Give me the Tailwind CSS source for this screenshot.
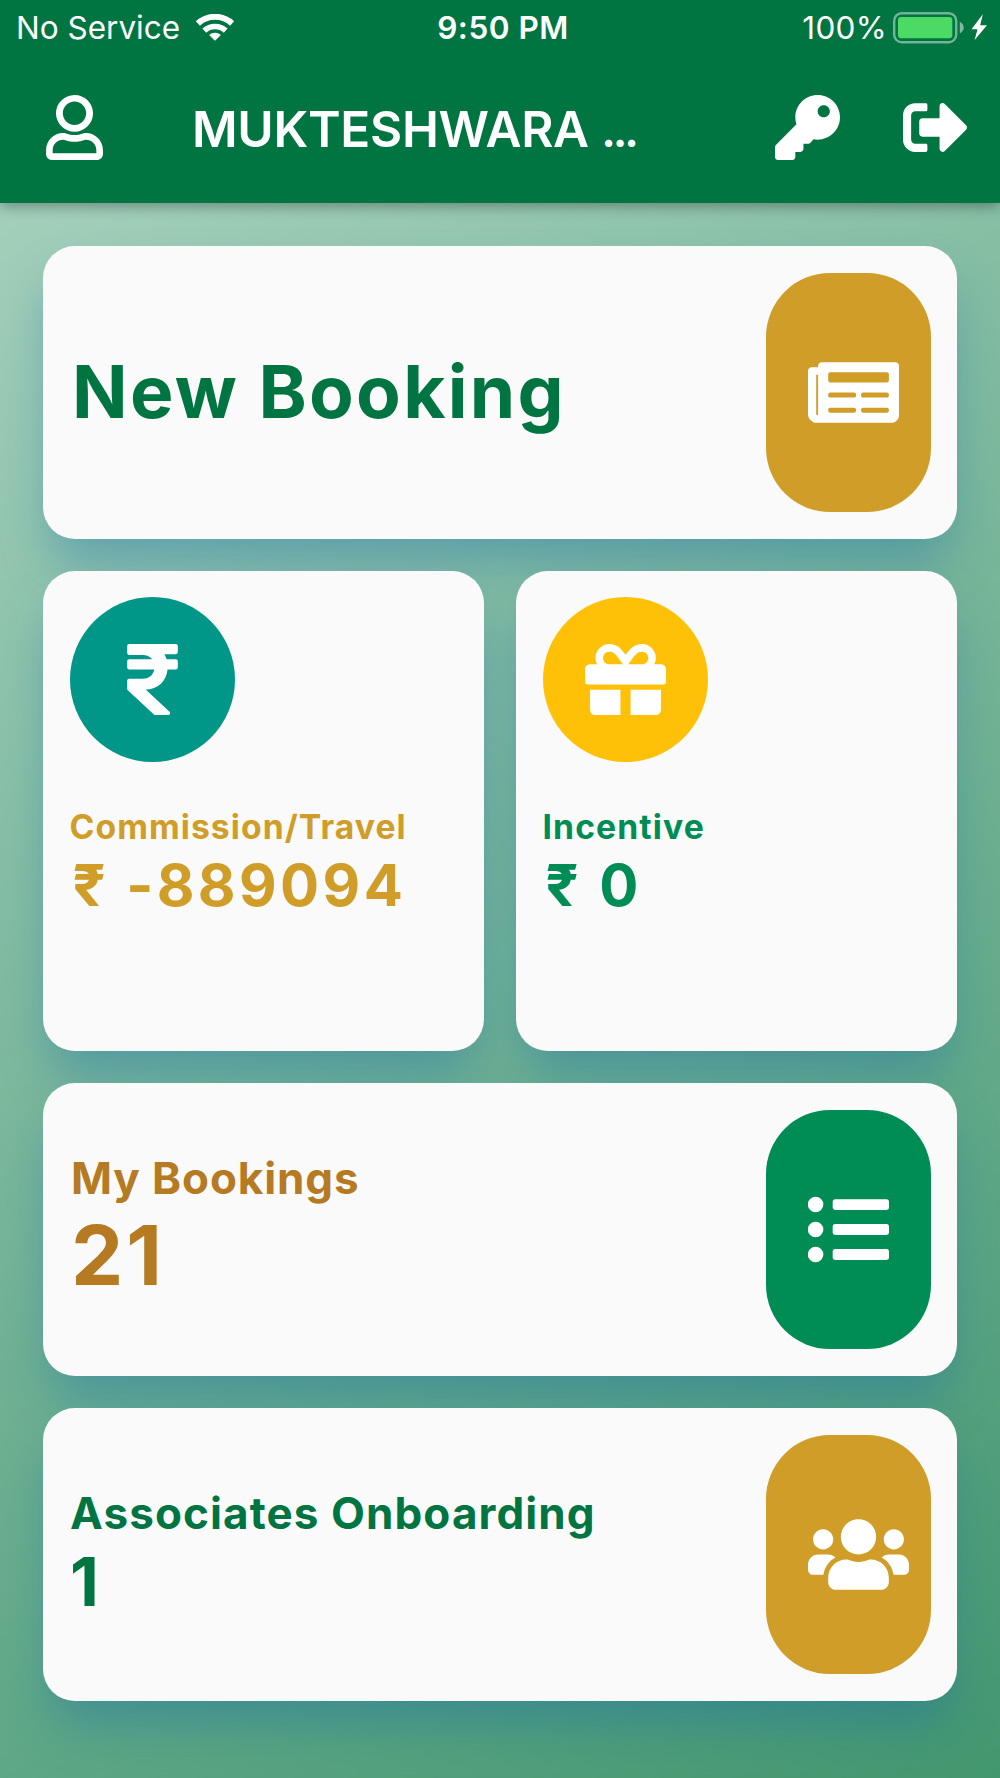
<!DOCTYPE html>
<html lang="en">
<head>
    <meta charset="UTF-8">
    <meta name="viewport" content="width=device-width, initial-scale=1.0">
    <title>Dashboard</title>
    <script src="https://cdn.jsdelivr.net/npm/@tailwindcss/browser@4"></script>
</head>
<body class="font-['Inter','Noto_Sans',sans-serif] w-[1000px] h-[1778px] overflow-hidden flex flex-col bg-[#5fa888]">

    <!-- Header -->
    <header class="relative z-20 h-[202.5px] shrink-0 bg-[#007542] text-white shadow-[0_4px_12px_rgba(0,0,0,0.3)]">

        <!-- Status bar -->
        <div class="grid grid-cols-[1fr_auto_1fr] items-center h-[54px] pl-4 pr-[13px] pt-px text-[31.5px] leading-[54px]">
            <div class="flex items-center gap-[15px]">
                <span>No Service</span>
                <svg class="w-[40px] h-[28px]" viewBox="0 0 40 28" fill="none" stroke="#fff">
                    <path d="M2.900 9.500a25 25 0 0 1 34.200 0" stroke-width="6"/>
                    <path d="M9.300 16.600a15.800 15.800 0 0 1 21.400 0" stroke-width="5.600"/>
                    <path d="M20 26.800l-5.900-5.700a8.600 8.600 0 0 1 11.800 0z" fill="#fff" stroke="none"/>
                </svg>
            </div>
            <span class="pl-[3px] font-semibold tracking-[0.5px]">9:50 PM</span>
            <div class="flex items-center justify-end">
                <span class="tracking-[0.3px] mr-[6px]">100%</span>
                <svg class="w-[94px] h-[32px]" viewBox="0 0 94 32">
                    <rect x="1.200" y="1.200" width="62" height="29" rx="7.500" fill="none" stroke="#fff" stroke-opacity=".45" stroke-width="2.400"/>
                    <rect x="5" y="5" width="54.300" height="21.300" rx="3" fill="#4cd964"/>
                    <path d="M66.800 9.800c5.200 2.600 5.200 9 0 11.600z" fill="#fff" fill-opacity=".5"/>
                    <path d="M89.800 2.300L78.500 17.300h6L81.600 28 94 13.200h-6.800z" fill="#fff"/>
                </svg>
            </div>
        </div>

        <!-- App bar -->
        <div class="flex items-center h-[147px] pl-[46px] pr-8">
            <svg class="w-[57px] h-[65px]" viewBox="0 0 448 512" fill="#fff">
                <path d="M313.600 300c-28.700 0-42.500 16-89.600 16-47.100 0-60.800-16-89.600-16C60.200 300 0 360.200 0 434.400V464c0 26.500 21.500 48 48 48h352c26.500 0 48-21.500 48-48v-29.600c0-74.200-60.200-134.400-134.400-134.400zM396 459H52v-24.600c0-45.600 36.800-81.400 82.400-81.400 14.600 0 38.300 16 89.600 16 51.700 0 74.900-16 89.600-16 45.600 0 82.400 35.800 82.400 81.400V459zM224 290c80.500 0 146-65.500 146-146S304.500 0 224 0 78 65.500 78 144s66.500 146 146 146zm0-238c50.900 0 92 41.100 92 92s-41.100 92-92 92-92-41.100-92-92 41.100-92 92-92z"/>
            </svg>
            <h1 class="ml-[89px] pt-[3px] w-[489px] text-[49.5px] font-semibold tracking-[-0.3px] whitespace-nowrap">MUKTESHWARA<span class="pl-[4px] text-[46px] tracking-[-3.2px]"> ...</span></h1>
            <svg class="ml-[94px] w-[65px] h-[65px]" viewBox="0 0 512 512" fill="#fff">
                <path d="M512 176.001C512 273.203 433.202 352 336 352c-11.220 0-22.190-1.062-32.827-3.069l-24.012 27.014A23.999 23.999 0 0 1 261.223 384H224v40c0 13.255-10.745 24-24 24h-40v40c0 13.255-10.745 24-24 24H24c-13.255 0-24-10.745-24-24v-78.059c0-6.365 2.529-12.470 7.029-16.971l161.802-161.802C163.108 213.814 160 195.271 160 176 160 78.798 238.797.001 335.999 0 433.488-.001 512 78.511 512 176.001zM336 128c0 26.510 21.490 48 48 48s48-21.490 48-48-21.490-48-48-48-48 21.490-48 48z"/>
            </svg>
            <svg class="ml-auto w-[65px] h-[65px]" viewBox="0 0 512 512" fill="#fff">
                <path d="M497 273L329 441c-15 15-41 4.500-41-17v-96H152c-13.300 0-24-10.700-24-24v-96c0-13.300 10.700-24 24-24h136V88c0-21.400 25.900-32 41-17l168 168c9.300 9.400 9.300 24.600 0 34zM192 436v-40c0-6.600-5.400-12-12-12H96c-17.700 0-32-14.300-32-32V160c0-17.700 14.300-32 32-32h84c6.600 0 12-5.400 12-12V76c0-6.600-5.400-12-12-12H96c-53 0-96 43-96 96v192c0 53 43 96 96 96h84c6.600 0 12-5.400 12-12z"/>
            </svg>
        </div>
    </header>

    <!-- Cards -->
    <main class="flex-1 px-[43px] pt-[43px] flex flex-col gap-8 bg-[linear-gradient(147.6deg,#a3cfbb,#43976f)]">

        <section class="h-[293px] shrink-0 flex items-center justify-between p-[27px] pr-[26.5px] rounded-[32px] bg-[#fafafa] shadow-[0_30px_50px_-8px_rgba(20,105,170,0.4)]">
            <h2 class="pl-[2px] text-[73px] leading-[88px] font-bold tracking-[2.26px] text-[#007542]">New Booking</h2>
            <div class="w-[165px] h-full flex items-center pl-[42px] rounded-[64px] bg-[#cf9d28]">
                <svg class="w-[91px] h-[81px] shrink-0" viewBox="0 0 576 512" fill="#fff">
                    <path d="M552 64H88c-13.255 0-24 10.745-24 24v8H24c-13.255 0-24 10.745-24 24v272c0 30.928 25.072 56 56 56h472c26.510 0 48-21.490 48-48V88c0-13.255-10.745-24-24-24zM58 400a8 8 0 0 1-6-8V144h12v248a8 8 0 0 1-6 8zm234-16H140c-6.627 0-12-5.373-12-12v-8c0-6.627 5.373-12 12-12h152c6.627 0 12 5.373 12 12v8c0 6.627-5.373 12-12 12zm208 0H348c-6.627 0-12-5.373-12-12v-8c0-6.627 5.373-12 12-12h152c6.627 0 12 5.373 12 12v8c0 6.627-5.373 12-12 12zm-208-96H140c-6.627 0-12-5.373-12-12v-8c0-6.627 5.373-12 12-12h152c6.627 0 12 5.373 12 12v8c0 6.627-5.373 12-12 12zm208 0H348c-6.627 0-12-5.373-12-12v-8c0-6.627 5.373-12 12-12h152c6.627 0 12 5.373 12 12v8c0 6.627-5.373 12-12 12zm0-96H140c-6.627 0-12-5.373-12-12v-40c0-6.627 5.373-12 12-12h360c6.627 0 12 5.373 12 12v40c0 6.627-5.373 12-12 12z"/>
                </svg>
            </div>
        </section>

        <div class="grid grid-cols-2 gap-8 h-[480px] shrink-0">
            <div class="rounded-[32px] shadow-[0_30px_50px_-8px_rgba(20,105,170,0.4)]">
                <section class="relative z-10 h-full p-[26.500px] rounded-[32px] bg-[#fafafa]">
                    <div class="size-[165px] rounded-full flex items-center justify-center bg-[#009688]">
                        <svg class="w-[51px] h-[81px]" viewBox="0 0 320 512" fill="#fff">
                            <path d="M308 96c6.627 0 12-5.373 12-12V44c0-6.627-5.373-12-12-12H12C5.373 32 0 37.373 0 44v44.748c0 6.627 5.373 12 12 12h85.280c27.308 0 48.261 9.958 60.970 27.252H12c-6.627 0-12 5.373-12 12v40c0 6.627 5.373 12 12 12h158.757c-6.217 36.086-32.951 58.632-74.757 58.632H12c-6.627 0-12 5.373-12 12v53.012c0 3.349 1.400 6.546 3.861 8.818l165.052 152.356a12.001 12.001 0 0 0 8.139 3.182h82.562c10.924 0 16.166-13.408 8.139-20.818L116.871 319.906c76.499-2.340 131.144-53.395 138.318-127.906H308c6.627 0 12-5.373 12-12v-40c0-6.627-5.373-12-12-12h-58.690c-3.486-11.541-8.280-22.246-14.252-32H308z"/>
                        </svg>
                    </div>
                    <p class="mt-[44px] text-[33.7px] leading-[42px] font-bold tracking-[1.05px] text-[#d09d28]">Commission/Travel</p>
                    <p class="pl-[3px] mt-px text-[58px] leading-[72px] font-bold tracking-[3.4px] text-[#d09d28] whitespace-nowrap">₹ -889094</p>
                </section>
            </div>

            <div class="rounded-[32px] shadow-[0_30px_50px_-8px_rgba(20,105,170,0.4)]">
                <section class="relative z-10 h-full p-[26.500px] rounded-[32px] bg-[#fafafa]">
                    <div class="size-[165px] rounded-full flex items-center justify-center bg-[#ffc107]">
                        <svg class="size-[81px]" viewBox="0 0 512 512" fill="#fff">
                            <path d="M32 448c0 17.700 14.300 32 32 32h160V320H32v128zm256 32h160c17.700 0 32-14.300 32-32V320H288v160zm192-320h-42.100c6.200-12.100 10.100-25.500 10.100-40 0-48.500-39.500-88-88-88-41.600 0-68.500 21.300-103 68.300-34.500-47-61.400-68.300-103-68.300-48.500 0-88 39.500-88 88 0 14.500 3.800 27.900 10.100 40H32c-17.700 0-32 14.300-32 32v80c0 8.800 7.200 16 16 16h480c8.800 0 16-7.200 16-16v-80c0-17.700-14.300-32-32-32zm-326.100 0c-22.100 0-40-17.900-40-40s17.900-40 40-40c19.900 0 34.600 3.300 86.100 80h-86.100zm206.100 0h-86.100c51.400-76.500 65.700-80 86.100-80 22.100 0 40 17.900 40 40s-17.900 40-40 40z"/>
                        </svg>
                    </div>
                    <p class="mt-[44px] text-[33.7px] leading-[42px] font-bold tracking-[1.1px] text-[#008c55]">Incentive</p>
                    <p class="pl-[3px] mt-px text-[58px] leading-[72px] font-bold tracking-[3.5px] text-[#008c55]">₹ 0</p>
                </section>
            </div>
        </div>

        <section class="h-[293px] shrink-0 flex items-center justify-between p-[27px] pr-[26.5px] rounded-[32px] bg-[#fafafa] shadow-[0_30px_50px_-8px_rgba(20,105,170,0.4)]">
            <div class="pb-[3px] pl-px text-[#b57a22]">
                <p class="text-[44px] leading-[54px] font-bold tracking-[0.89px]">My Bookings</p>
                <p class="mt-px text-[83px] leading-[98px] font-bold tracking-[3px]">21</p>
            </div>
            <div class="w-[165px] h-full flex items-center pl-[42px] rounded-[64px] bg-[#008c55]">
                <svg class="size-[81px] shrink-0" viewBox="0 0 512 512" fill="#fff">
                    <circle cx="48" cy="98" r="49"/>
                    <circle cx="48" cy="256" r="49"/>
                    <circle cx="48" cy="414" r="49"/>
                    <rect x="156" y="64" width="356" height="68" rx="16"/>
                    <rect x="156" y="222" width="356" height="68" rx="16"/>
                    <rect x="156" y="380" width="356" height="68" rx="16"/>
                </svg>
            </div>
        </section>

        <section class="h-[293px] shrink-0 flex items-center justify-between p-[27px] pr-[26.5px] rounded-[32px] bg-[#fafafa] shadow-[0_30px_50px_-8px_rgba(20,105,170,0.4)]">
            <div class="text-[#007542]">
                <p class="text-[44px] leading-[54px] font-bold tracking-[1.1px]">Associates Onboarding</p>
                <p class="mt-px text-[67px] leading-[82px] font-bold">1</p>
            </div>
            <div class="w-[165px] h-full flex items-center pl-[42px] rounded-[64px] bg-[#cf9d28]">
                <svg class="w-[101px] h-[81px] shrink-0" viewBox="0 0 640 512" fill="#fff">
                    <path d="M96 224c35.300 0 64-28.700 64-64s-28.700-64-64-64-64 28.700-64 64 28.700 64 64 64zm448 0c35.300 0 64-28.700 64-64s-28.700-64-64-64-64 28.700-64 64 28.700 64 64 64zm32 32h-64c-17.600 0-33.500 7.100-45.100 18.600 40.300 22.100 68.900 62 75.100 109.400h66c17.700 0 32-14.300 32-32v-32c0-35.300-28.700-64-64-64zm-256 0c61.900 0 112-50.100 112-112S381.900 32 320 32 208 82.100 208 144s50.100 112 112 112zm76.800 32h-8.300c-20.800 10-43.900 16-68.500 16s-47.600-6-68.500-16h-8.300C179.600 288 128 339.600 128 403.200V432c0 26.500 21.500 48 48 48h288c26.500 0 48-21.500 48-48v-28.800c0-63.600-51.600-115.200-115.200-115.200zm-223.700-13.400C161.500 263.100 145.600 256 128 256H64c-35.300 0-64 28.700-64 64v32c0 17.700 14.300 32 32 32h65.900c6.300-47.400 34.900-87.300 75.200-109.400z"/>
                </svg>
            </div>
        </section>
    </main>
</body>
</html>
